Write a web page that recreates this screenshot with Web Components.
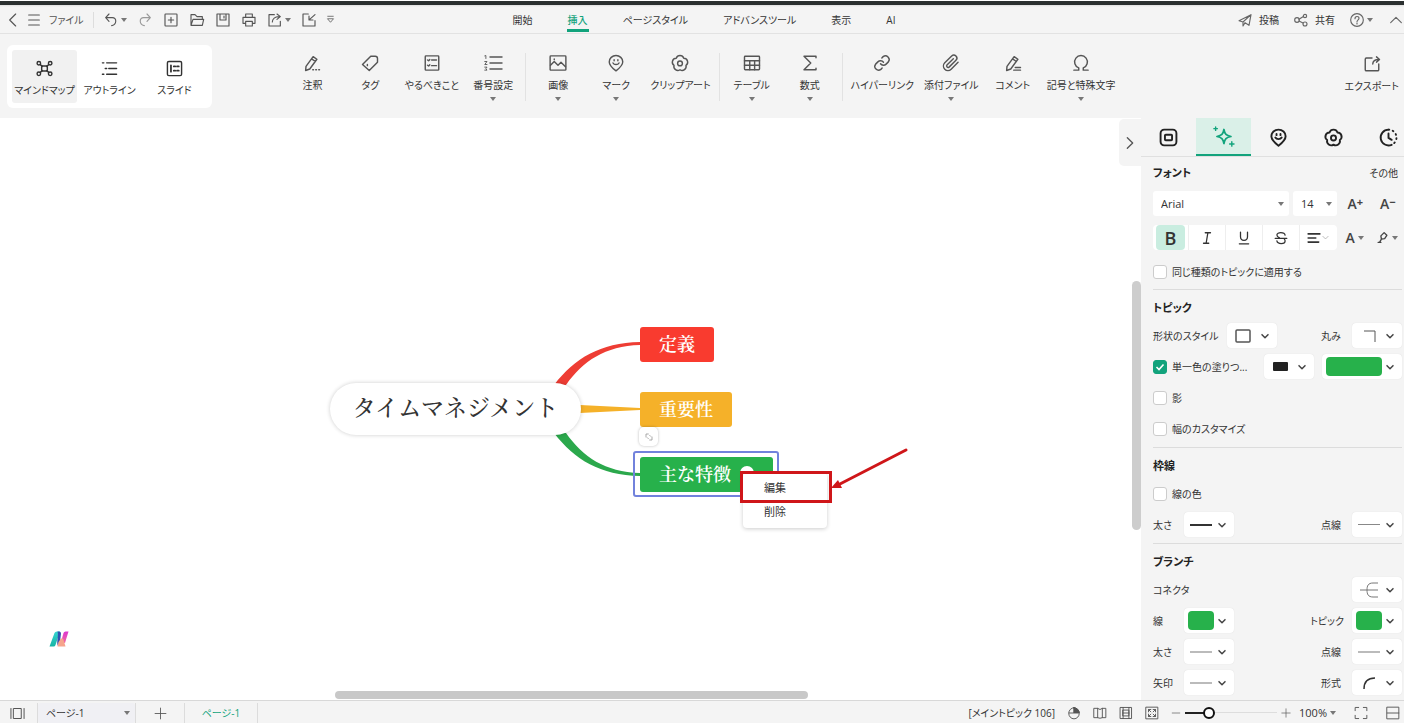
<!DOCTYPE html>
<html lang="ja">
<head>
<meta charset="utf-8">
<title>タイムマネジメント</title>
<style>
html,body{height:100%;margin:0}
body{
  --accent:#12a37c;--bar:#f4f4f4;--line:#dcdcdc;--ink:#333;--green:#27b14b;
  font:10px/16px "Open Sans","Noto Sans CJK JP",sans-serif;
  font-feature-settings:"palt";color:var(--ink);background:#fff;overflow:hidden}
</style>
</head>
<body>
<mind-app></mind-app>
<script>
const BASE=`*{box-sizing:border-box}
button,select,input{font:inherit;font-feature-settings:inherit;color:inherit;margin:0}
button{border:0;background:none;padding:0;display:flex;align-items:center;justify-content:center;white-space:nowrap}
a{color:inherit;text-decoration:none}`;

function define(name,css,html,setup){
  const t=document.createElement('template');
  t.innerHTML=`<style>${BASE}${css}</style>${html}`;
  customElements.define(name,class extends HTMLElement{
    connectedCallback(){
      if(this.shadowRoot)return;
      this.attachShadow({mode:'open'}).append(t.content.cloneNode(true));
      if(setup)setup(this,this.shadowRoot);
    }
  });
}

const flower='<path d="M7 5.600A5.300 5.300 0 0 1 17 5.600A5.300 5.300 0 0 1 20 15.200A5.300 5.300 0 0 1 12 21A5.300 5.300 0 0 1 4 15.200A5.300 5.300 0 0 1 7 5.600z"/><circle cx="12" cy="12.500" r="3.200"/>';
const smile='<path d="M12 22.500C7.500 19 3 15.500 3 10.500a9 8.500 0 0 1 18 0c0 5-4.500 8.500-9 12z"/><path d="M9.500 7.500v1.500M14.500 7.500v1.500M8 12c1.500 2.800 6.500 2.800 8 0"/>';
const pencil='<path d="M4 16.500 13.500 3.500 18.500 7 9 20l-5.500 2zM11.500 6.500l5 3.500"/>';
const I={
back:'<path d="M16 3 7 12l9 9"/>',
menu:'<path d="M4 4.500h16M4 12h16M4 19.500h16"/>',
undo:'<path d="M9 3 4 8.500 9 14M4.500 8.500H14c7 0 7 10-1 12"/>',
redo:'<path d="M15 3l5 5.500-5 5.500M19.500 8.500H10c-7 0-7 10 1 12"/>',
add:'<rect x="3" y="3" width="18" height="18" rx="1"/><path d="M12 8v8M8 12h8"/>',
open:'<path d="M3 20V4h6l3 3h8v4M3 20l3-9h16l-2 9z"/>',
save:'<path d="M3 3h18v18H3zM7.500 3v9h9V3M13.500 6v3"/>',
print:'<path d="M7 8V3h10v5M7 17H3V8h18v9h-4M7 14h10v7H7z"/>',
share:'<path d="M11 4H3v17h17v-7M8 15c0-5 4-8 10-8M15 3l5 4-5 4"/>',
imp:'<path d="M11 3H3v18h18v-8M21 4l-8 7M12 6v6h6"/>',
more:'<path d="M6 5h12M6 11l6 7 6-7z"/>',
send:'<path d="M3 13 21 4l-3 16-6-4-3 5v-6zM9 15 21 4"/>',
nodes:'<circle cx="6" cy="12" r="3.500"/><circle cx="18" cy="6" r="2.500"/><circle cx="18" cy="18" r="3"/><path d="m9 11 6-4M9 13.500l6 3"/>',
help:'<circle cx="12" cy="12" r="9.500"/><path d="M9 10c0-4.500 6-4 6-.5 0 2-3 2.500-3 5M12 16.500v1.500"/>',
up:'<path d="m4 16 8-8 8 8"/>',
right:'<path d="m8 4 8 8-8 8"/>',
mind:'<rect x="8" y="8.500" width="8" height="7" rx="1"/><circle cx="4" cy="4.500" r="2.500"/><circle cx="20" cy="4.500" r="2.500"/><circle cx="4" cy="19.500" r="2.500"/><circle cx="20" cy="19.500" r="2.500"/><path d="M6 6.500 9 9M18 6.500 15 9M6 17.500 9 15M18 17.500 15 15"/>',
outline:'<path d="M2 4h2M8 4h14M6 12h2M11 12h11M2 20h2M8 20h14"/>',
slide:'<rect x="2" y="2" width="20" height="20" rx="2"/><path d="M7 7.500v9M11 9h2M15.500 9H18M11 15h2M15.500 15H18" stroke-width="2.500"/>',
note:pencil+'<path d="M13 21h1M17 21h1M21 21h1"/>',
tag:'<path d="M13 3h6c2 0 3 1 3 3v5L11 22 2 14zM8.500 14v1.500"/>',
todo:'<rect x="3" y="2.500" width="18" height="19" rx="1"/><path d="m6 8 1.500 1L9 7.500M11.500 8H18M6 15l1.500 1L9 14.500M11.500 15.500H18"/>',
num:'<path d="M8 4h16M8 12h16M8 20h16"/><path d="M1 2.500 2.500 2v4M1 10h3L1 14h3M1 17.500h3L2.500 19.500 4 21.500H1" stroke-width="1.200"/>',
image:'<rect x="1.500" y="2.500" width="21" height="19" rx="1"/><path d="m2 15 5-5 5 5 4-4 6 6M7 6.500v1"/>',
mark:smile,clip:flower,
table:'<rect x="2" y="3" width="20" height="18" rx="1"/><path d="M2 9h20M2 15h20M9 9v12M15.500 9v12"/>',
sigma:'<path d="M20 5V3H4l9 9-9 9h16v-2"/>',
link:'<path d="M10 13a5 5 0 0 0 7.500.5l3-3a5 5 0 0 0-7-7l-1.700 1.700M14 11a5 5 0 0 0-7.500-.5l-3 3a5 5 0 0 0 7 7l1.700-1.700"/>',
attach:'<path d="M21.400 11.100l-9.200 9.200a6 6 0 0 1-8.500-8.500l9.200-9.200a4 4 0 0 1 5.700 5.700l-9.200 9.200a2 2 0 0 1-2.800-2.800l8.500-8.500"/>',
comment:pencil+'<path d="M15 18h7M13 21.500h9"/>',
omega:'<path d="M2.500 21.500H9V18.500A8.500 8.500 0 1 1 15 18.500V21.500H21.500"/>',
export:'<path d="M12 4H4.500Q3 4 3 5.500v14q0 1.500 1.500 1.500h15q1.500 0 1.500-1.500V12M13 12c0-4 3-6 8-6M18 2.500 22 6l-4 3.500"/>',
topic:'<rect x="2" y="2" width="20" height="20" rx="4.500"/><rect x="7.500" y="8.500" width="9" height="7" rx="1"/>',
spark:'<path d="M12.500 4c1 5.500 2.500 7 8 8-5.500 1-7 2.500-8 8-1-5.500-2.500-7-8-8 5.500-1 7-2.500 8-8z"/><path d="M3 1v4M1 3h4M21.500 18v5M19 20.500h5" stroke-width="1.600"/>',
clock:'<path d="M12 2a10 10 0 1 0 4 19.200M12 7v5.500l4 2.500"/><path d="M12 2a10 10 0 0 1 4 19.200" stroke-dasharray="1 4.500"/>',
italic:'<path d="M9 3h9M6 21h9M13.500 3l-3 18"/>',
under:'<path d="M6 2v8c0 8 12 8 12 0V2M4 22h16"/>',
strike:'<path d="M19 7c-1-5.500-14-5.500-14 0 0 2 1.500 3.500 4 4.500M2 12.500h20M5 17c1 6 14 6 14 0 0-1.500-.5-2.500-1.500-3.500"/>',
align:'<path d="M2 5h20M2 12h13M2 19h18" stroke-width="2.800"/>',
pen:'<path d="M10 15 9 9l6-6 5 5-4 6zM10 15l-3 5M4 21h5"/>',
down:'<path d="m3 8 9 9 9-9"/>',
plus:'<path d="M12 2v20M2 12h20"/>',minus:'<path d="M3 12h18"/>',
panes:'<rect x="6" y="4" width="12" height="16"/><path d="M1.500 4v16M22.500 4v16"/>',
mouse:'<path d="M12 3v9H3.500M12 3a9 9.500 0 1 0 9 9.500 9 9.500 0 0 0-9-9.500z"/><path d="M12 3v9h9c0-5-4-9-9-9z" fill="currentColor"/>',
book:'<path d="M2 4h6l4 2 4-2h6v16h-6l-4 1-4-1H2zM8 4v16M16 4v16"/>',
film:'<path d="M2.500 2.500h19v19h-19zM7 2.500v19M17 2.500v19M7 7h10v10H7zM7 12h10"/>',
fit:'<rect x="2" y="2" width="20" height="20"/><path d="M6 10V6h4M14 6h4v4M18 14v4h-4M10 18H6v-4M6 6l4 4M18 6l-4 4M18 18l-4-4M6 18l4-4"/>',
full:'<path d="M2 8V2.500h6M16 2.500h6V8M22 16v5.500h-6M8 21.500H2V16"/>',
fold:'<path d="M3 12V3h7M21 12v9h-7M14 7l3 3M7 14l3 3"/>',
split:'<path d="M2 2h20v20H2zM2 12h20"/>'
};
define('ui-icon',`:host{display:inline-flex;flex:none;width:16px;height:16px}svg{width:100%;height:100%;overflow:visible;fill:none;stroke:currentColor;stroke-width:var(--stroke,1.600);stroke-linejoin:round;stroke-linecap:round}`,
 `<svg viewBox="0 0 24 24" aria-hidden="true"></svg>`,(h,r)=>{r.querySelector('svg').innerHTML=I[h.getAttribute('name')]});

define('ui-caret',`:host{display:block;flex:none;width:8px;height:8px}svg{display:block}`,
 `<svg width="8" height="8" aria-hidden="true"><path d="M1 2h6L4 6z" fill="#777"/></svg>`);

define('tool-button',`:host{display:block;flex:none}button{width:26px;height:24px}button.drop{width:34px;padding-left:5px;justify-content:flex-start;gap:1px}`,
 `<button><ui-icon></ui-icon></button>`,(h,r)=>{
  const b=r.querySelector('button');b.setAttribute('aria-label',h.getAttribute('label'));
  b.innerHTML=`<ui-icon name="${h.getAttribute('icon')}"></ui-icon>`+(h.hasAttribute('drop')?'<ui-caret></ui-caret>':'');
  if(h.hasAttribute('drop'))b.className='drop';
 });

define('title-bar',`
:host{display:grid;grid-template-columns:1fr auto 1fr;height:34px;padding-top:6px;background:linear-gradient(#fff 1px,#2b3030 1px,#2b3030 5px,#dedede 5px,var(--bar) 7px);border-bottom:1px solid #e2e2e2;--stroke:1.700}
.left,.right{display:flex;align-items:center}
.left{padding-left:2px;color:#555}
.back{width:22px}.file{gap:7px;padding:0 2px}
.sep{width:1px;height:16px;background:#ddd;margin:0 4px 0 7px}
tool-button[icon=redo]{color:#999}
.last{width:18px}.last ui-icon{width:11px;height:11px}
nav{display:flex;align-items:flex-start;gap:33px;padding-left:4px}
nav a{display:flex;align-items:center;height:26px;padding:5px 1px 0;border-bottom:3px solid transparent}
nav a[aria-current]{color:var(--accent);border-color:var(--accent);font-weight:500}
.right{justify-content:flex-end;gap:14px}.right button{gap:6px}.right .help{gap:1px}
.right ui-icon{color:#666}`,
`<div class="left">
<button class="back" aria-label="戻る"><ui-icon name="back"></ui-icon></button>
<button class="file"><ui-icon name="menu"></ui-icon>ファイル</button><span class="sep"></span>
<tool-button icon="undo" drop label="元に戻す"></tool-button><tool-button icon="redo" label="やり直す"></tool-button>
<tool-button icon="add" label="新規"></tool-button><tool-button icon="open" label="開く"></tool-button>
<tool-button icon="save" label="保存"></tool-button><tool-button icon="print" label="印刷"></tool-button>
<tool-button icon="share" drop label="書き出し"></tool-button><tool-button icon="imp" label="取り込み"></tool-button>
<button class="last" aria-label="その他"><ui-icon name="more"></ui-icon></button></div>
<nav><a href="#home">開始</a><a href="#insert" aria-current="page">挿入</a><a href="#style">ページスタイル</a><a href="#tools">アドバンスツール</a><a href="#view">表示</a><a href="#ai">AI</a></nav>
<div class="right"><button><ui-icon name="send"></ui-icon>投稿</button><button><ui-icon name="nodes"></ui-icon>共有</button><button class="help" aria-label="ヘルプ"><ui-icon name="help"></ui-icon><ui-caret></ui-caret></button><button aria-label="折りたたむ"><ui-icon name="up"></ui-icon></button></div>`);

define('ribbon-item',`:host{display:block;flex:none}
button{flex-direction:column;justify-content:flex-start;min-width:58px;padding:1px 5px 0}
ui-icon{width:18px;height:18px;margin-bottom:5px;color:#555;--stroke:1.900}
ui-caret{margin-top:2px}`,
`<button><ui-icon></ui-icon><span><slot></slot></span></button>`,(h,r)=>{
 const b=r.querySelector('button');
 b.innerHTML=`<ui-icon name="${h.getAttribute('icon')}"></ui-icon><span><slot></slot></span>`+(h.hasAttribute('drop')?'<ui-caret></ui-caret>':'');
});

define('ribbon-bar',`
:host{display:grid;grid-template-columns:1fr auto 1fr;height:84px;background:var(--bar);align-items:start}
.modes{justify-self:start;display:flex;margin:11px 0 0 7px;padding:5px;height:63px;background:#fff;border-radius:6px}
.modes button{flex-direction:column;width:65px;padding-top:4px;gap:5px;border-radius:3px}
.modes button[aria-pressed=true]{background:#f1f1f1}
.modes ui-icon{width:17px;height:17px;--stroke:2}
.items{display:flex;padding-top:19px}
.sep{width:1px;height:48px;background:#e2e2e2;margin:0 3px}
.end{justify-self:end;padding-top:20px}`,
`<div class="modes"><button aria-pressed="true"><ui-icon name="mind"></ui-icon>マインドマップ</button><button aria-pressed="false"><ui-icon name="outline"></ui-icon>アウトライン</button><button aria-pressed="false"><ui-icon name="slide"></ui-icon>スライド</button></div>
<div class="items"><ribbon-item icon="note">注釈</ribbon-item><ribbon-item icon="tag">タグ</ribbon-item><ribbon-item icon="todo">やるべきこと</ribbon-item><ribbon-item icon="num" drop>番号設定</ribbon-item><span class="sep"></span>
<ribbon-item icon="image" drop>画像</ribbon-item><ribbon-item icon="mark" drop>マーク</ribbon-item><ribbon-item icon="clip">クリップアート</ribbon-item><span class="sep"></span>
<ribbon-item icon="table" drop>テーブル</ribbon-item><ribbon-item icon="sigma" drop>数式</ribbon-item><span class="sep"></span>
<ribbon-item icon="link">ハイパーリンク</ribbon-item><ribbon-item icon="attach" drop>添付ファイル</ribbon-item><ribbon-item icon="comment">コメント</ribbon-item><ribbon-item icon="omega" drop>記号と特殊文字</ribbon-item></div>
<div class="end"><ribbon-item icon="export">エクスポート</ribbon-item></div>`);

define('topic-node',`:host{position:absolute;display:flex;align-items:center;padding:0 19px;height:35px;border-radius:3px;color:#fff;font-size:18px;line-height:24px;font-weight:600;font-feature-settings:normal;white-space:nowrap;background:var(--fill)}`,`<slot></slot>`);

define('mind-canvas',`
:host{display:block;position:relative;background:#fff;overflow:hidden;min-width:0}
.branches,.arrow{position:absolute;left:0;top:0;width:1000px;height:500px;pointer-events:none}
.root{position:absolute;left:330px;top:265px;width:251px;height:52px;border-radius:26px;background:#fff;box-shadow:0 0 4px #0003;display:flex;align-items:center;justify-content:center;font-size:23px;line-height:32px;font-weight:500;font-family:"Liberation Serif","Noto Serif CJK JP","Noto Sans CJK JP",serif;font-feature-settings:normal}
.sel{position:absolute;left:633px;top:333px;width:146px;height:46px;border:2px solid #7282dc;border-radius:3px}
.n1,.n2,.n3{left:640px;font-family:"Liberation Serif","Noto Serif CJK JP","Noto Sans CJK JP",serif}
.n1{top:209px}.n2{top:274px}.n3{top:339px;padding-right:42px}
.fold{position:absolute;left:639px;top:309px;width:19px;height:19px;border-radius:5px;background:#fff;box-shadow:0 0 3px #0004;color:#999}
.fold ui-icon{width:8px;height:8px;--stroke:2.500}
.dot{position:absolute;left:740px;top:348px;width:14px;height:14px;border-radius:50%;background:#fff}
.menu{position:absolute;left:743px;top:355px;width:84px;height:55px;padding-top:3px;background:#fff;border-radius:4px;box-shadow:0 1px 4px #0003;font-size:11px}
.menu button{width:100%;height:24px;padding-left:21px;justify-content:flex-start}
.frame{position:absolute;left:740px;top:353px;width:92px;height:32px;border:3px solid #cf1619}
.toggle{position:absolute;right:0;top:1px;width:22px;height:47px;background:var(--bar);border-radius:5px 0 0 5px;color:#555}
.toggle ui-icon{--stroke:2}
.v{position:absolute;right:0;top:163px;width:9px;height:249px;background:#cdcdcd;border-radius:5px}
.h{position:absolute;left:335px;bottom:1px;width:473px;height:8px;background:#c8c8c8;border-radius:4px}
.logo{position:absolute;left:49px;top:513px;width:20px;height:16px}`,
`<svg class="branches" aria-hidden="true"><path fill="#ee3d34" d="M554 267C575 240 600 225 640 224v3C605 228 583 243 566 267z"/><path fill="#f5b129" d="M580 287l60 3v2l-60 3z"/><path fill="#2ba84c" d="M554 315C575 342 600 357 640 358v-3C605 354 583 339 566 315z"/></svg>
<div class="root">タイムマネジメント</div>
<div class="sel"></div>
<topic-node class="n1" style="--fill:#f93b2f">定義</topic-node>
<topic-node class="n2" style="--fill:#f5b129">重要性</topic-node>
<topic-node class="n3" style="--fill:#27b14b">主な特徴</topic-node>
<button class="fold" aria-label="展開"><ui-icon name="fold"></ui-icon></button>
<span class="dot"></span>
<div class="menu" role="menu"><button role="menuitem">編集</button><button role="menuitem">削除</button></div>
<div class="frame"></div>
<svg class="arrow" aria-hidden="true"><path d="M906 332 838 367" stroke="#cf1619" stroke-width="3" stroke-linecap="round"/><path d="M831 370l7-8 4 8z" fill="#cf1619"/></svg>
<svg class="logo" viewBox="0 0 20 16" aria-hidden="true"><defs><linearGradient id="a" x2="0" y2="1"><stop stop-color="#35d4d0"/><stop offset="1" stop-color="#18b4a4"/></linearGradient><linearGradient id="b" x2="0" y2="1"><stop stop-color="#dd35d0"/><stop offset="1" stop-color="#f06aa0"/></linearGradient></defs><path d="M5.500 2Q6 .5 8 .5h3L6.500 14q-.5 1.500-2 1.500H.5z" fill="url(#a)"/><path d="M8.500.5h1.500q2 0 2 2L11 11 9 15C7 11 10 5 8.500.5z" fill="#3350b0"/><path d="M14.500 2Q15 .5 16.500.5H19.500L16 12l-4-1z" fill="url(#b)"/><path d="M9.500 11 12 7.500l2 0L16.500 15.500H8.500z" fill="#f6a48c"/></svg>
<div class="v"></div><div class="h"></div>
<button class="toggle" aria-label="パネルを閉じる"><ui-icon name="right"></ui-icon></button>`);

define('drop-select',`:host{display:block;position:relative}
select{appearance:none;width:100%;height:100%;border:0;border-radius:3px;background:var(--select-bg,#fff);padding:0 14px 0 8px;outline:0}
ui-caret{position:absolute;right:4px;top:calc(50% - 4px);pointer-events:none}`,
`<select></select><ui-caret></ui-caret>`,(h,r)=>{const s=r.querySelector('select');s.setAttribute('aria-label',h.getAttribute('label'));s.add(new Option(h.getAttribute('value')))});

define('picker-box',`:host{display:block;flex:none;width:50px}:host([wide]){width:80px}
button{width:100%;height:25px;padding:0 8px 0 3px;background:#fff;border-radius:4px;gap:4px;box-shadow:0 0 1px #0002}
span{flex:1;display:flex;align-items:center;justify-content:center}ui-icon{width:8px;height:8px;color:#444;--stroke:4.500}`,
`<button aria-haspopup="listbox"><span><slot></slot></span><ui-icon name="down"></ui-icon></button>`,(h,r)=>r.querySelector('button').setAttribute('aria-label',h.getAttribute('label')));

define('check-row',`:host{display:block}label{display:flex;align-items:center;gap:5px;white-space:nowrap}
input{appearance:none;width:14px;height:14px;border:1px solid #ccc;border-radius:3px;background:#fff}
input:checked{border-color:var(--accent);background:var(--accent) url("data:image/svg+xml,%3Csvg xmlns='http://www.w3.org/2000/svg' viewBox='0 0 12 12'%3E%3Cpath d='M2.500 6l2.500 2.500 4.500-5' fill='none' stroke='white' stroke-width='1.600'/%3E%3C/svg%3E")}`,
`<label><input type="checkbox"><span><slot></slot></span></label>`,(h,r)=>{r.querySelector('input').checked=h.hasAttribute('checked')});

define('style-panel',`
:host{display:block;width:263px;background:var(--bar);overflow:hidden}
.tabs{display:flex;height:39px;border-bottom:1px solid #e0e0e0;color:#222}
.tabs button{flex:none;width:55px}.tabs ui-icon{width:19px;height:19px;--stroke:2.400}
.tabs [aria-selected=true]{background:#daf0e8;color:var(--accent);border-bottom:2px solid var(--accent)}
.tabs [aria-selected=true] ui-icon{width:21px;height:21px;--stroke:2}
section{margin:0 2px 0 12px;padding:6px 0 3px;border-top:1px solid var(--line)}
section.font{border:0;padding-top:4px;display:flex;flex-direction:column;gap:3px}
header{display:flex;justify-content:space-between;align-items:center;height:24px}
header a{margin-right:4px}
h2{margin:0;font-size:11px;font-weight:700;color:#222}
.row{display:flex;align-items:center;gap:8px;height:31px;white-space:nowrap}
.label{min-width:23px}.push{margin-left:auto}
.font .row{gap:4px}.font{padding-bottom:2px}
.face,.size{height:25px;font-size:11px}.face{width:136px}.size{width:44px}
.step{flex:1;font-size:14px;font-weight:600;color:#444}.step sup{font-size:11px;line-height:11px;font-weight:700;align-self:flex-start}
.group{display:flex;width:184px;height:25px;background:#fff;border-radius:4px;padding-left:3px}
.group button{width:37px;border-left:1px solid #eee;gap:1px}
.group .b{width:29px;background:#c9ede0;border:0;border-radius:4px;font-size:18px;font-weight:600;margin-right:3px}
.group ui-icon{width:14px;height:14px;--stroke:2.200}.group .mini{width:7px;height:7px;color:#999}
.color{flex:1;font-size:14px;font-weight:600;color:#444;gap:2px}.color ui-icon{width:13px;height:13px;--stroke:2.500}
.sw{width:26px;height:19px;border-radius:4px;background:var(--green)}.sw.big{width:56px}
.blk{width:15px;height:9px;background:#222;border-radius:1px}
.ln{width:22px;height:1px;background:#888}.ln.bold{height:2px;background:#333}.ln.mid{height:2px;background:#bbb}
svg{display:block;fill:none;stroke:#555}`,
`<div class="tabs" role="tablist"><button role="tab" aria-label="トピック"><ui-icon name="topic"></ui-icon></button><button role="tab" aria-selected="true" aria-label="スタイル"><ui-icon name="spark"></ui-icon></button><button role="tab" aria-label="マーク"><ui-icon name="mark"></ui-icon></button><button role="tab" aria-label="クリップアート"><ui-icon name="clip"></ui-icon></button><button role="tab" aria-label="履歴"><ui-icon name="clock"></ui-icon></button></div>
<section class="font"><header><h2>フォント</h2><a href="#more">その他</a></header>
<div class="row"><drop-select class="face" label="フォント" value="Arial"></drop-select><drop-select class="size" label="サイズ" value="14"></drop-select><button class="step" aria-label="大きく">A<sup>+</sup></button><button class="step" aria-label="小さく">A<sup>−</sup></button></div>
<div class="row"><div class="group"><button class="b" aria-label="太字">B</button><button aria-label="斜体"><ui-icon name="italic"></ui-icon></button><button aria-label="下線"><ui-icon name="under"></ui-icon></button><button aria-label="取り消し線"><ui-icon name="strike"></ui-icon></button><button aria-label="配置"><ui-icon name="align"></ui-icon><ui-icon class="mini" name="down"></ui-icon></button></div><button class="color" aria-label="文字色">A<ui-caret></ui-caret></button><button class="color" aria-label="蛍光ペン"><ui-icon name="pen"></ui-icon><ui-caret></ui-caret></button></div>
<div class="row"><check-row>同じ種類のトピックに適用する</check-row></div></section>
<section><header><h2>トピック</h2></header>
<div class="row"><span class="label">形状のスタイル</span><picker-box label="形状のスタイル"><svg width="18" height="14"><rect x="2" y="1" width="14" height="12" rx="1" stroke-width="1.500"/></svg></picker-box><span class="label push">丸み</span><picker-box label="丸み"><svg width="18" height="14"><path d="M4 2h11v11"/></svg></picker-box></div>
<div class="row"><check-row checked>単一色の塗りつ...</check-row><picker-box class="push" label="塗りつぶし"><span class="blk"></span></picker-box><picker-box wide label="塗りつぶしの色"><span class="sw big"></span></picker-box></div>
<div class="row"><check-row>影</check-row></div><div class="row"><check-row>幅のカスタマイズ</check-row></div></section>
<section><header><h2>枠線</h2></header><div class="row"><check-row>線の色</check-row></div>
<div class="row"><span class="label">太さ</span><picker-box label="太さ"><span class="ln bold"></span></picker-box><span class="label push">点線</span><picker-box label="点線"><span class="ln"></span></picker-box></div></section>
<section><header><h2>ブランチ</h2></header>
<div class="row"><span class="label">コネクタ</span><picker-box class="push" label="コネクタ"><svg width="20" height="18"><path d="M1 9h18M19 2h-5C9 2 8 5 8 9s1 7 6 7h5" stroke="#777"/></svg></picker-box></div>
<div class="row"><span class="label">線</span><picker-box label="線"><span class="sw"></span></picker-box><span class="label push">トピック</span><picker-box label="トピック"><span class="sw"></span></picker-box></div>
<div class="row"><span class="label">太さ</span><picker-box label="太さ"><span class="ln mid"></span></picker-box><span class="label push">点線</span><picker-box label="点線"><span class="ln mid"></span></picker-box></div>
<div class="row"><span class="label">矢印</span><picker-box label="矢印"><span class="ln mid"></span></picker-box><span class="label push">形式</span><picker-box label="形式"><svg width="18" height="16"><path d="M4 14c0-7 3-11 11-11" stroke="#333" stroke-width="1.500"/></svg></picker-box></div></section>`);

define('status-bar',`
:host{display:flex;align-items:stretch;justify-content:space-between;height:23px;background:var(--bar);border-top:1px solid #d8d8d8;padding-top:2px}
div{display:flex;align-items:center}
ui-icon{color:#555;width:14px;height:14px}
.left>*{height:100%}
.view{width:38px;padding-right:3px;border-right:1px solid var(--line)}.view ui-icon{width:15px;height:15px}
.page{width:98px;border-right:1px solid var(--line);--select-bg:#f0f0f4}
.plus{width:49px;border-right:1px solid var(--line)}.plus ui-icon{width:13px;height:13px}
.tab{display:flex;align-items:center;width:73px;justify-content:center;color:var(--accent);border-right:1px solid var(--line)}
.right{gap:12px;padding-right:4px}
.zoom{gap:4px}.zoom .step ui-icon{width:10px;height:10px}
.pct{gap:2px;margin-left:4px;font-size:11px}.last{gap:18px;margin-left:5px}
input{appearance:none;width:92px;height:12px;background:linear-gradient(#222,#222) 0 5px/24px 2px no-repeat,linear-gradient(#ddd,#ddd) 0 5px/100% 1px no-repeat}
input::-webkit-slider-thumb{appearance:none;width:12px;height:12px;border:2px solid #111;border-radius:50%;background:#fff}`,
`<div class="left"><button class="view" aria-label="表示"><ui-icon name="panes"></ui-icon></button><drop-select class="page" label="ページ" value="ページ-1"></drop-select><button class="plus" aria-label="ページを追加"><ui-icon name="plus"></ui-icon></button><a class="tab" href="#page1">ページ-1</a></div>
<div class="right"><span>[メイントピック 106]</span><button aria-label="マウス"><ui-icon name="mouse"></ui-icon></button><button aria-label="ブック"><ui-icon name="book"></ui-icon></button><button aria-label="スライド"><ui-icon name="film"></ui-icon></button><button aria-label="合わせる"><ui-icon name="fit"></ui-icon></button>
<div class="zoom"><button class="step" aria-label="縮小"><ui-icon name="minus"></ui-icon></button><input type="range" min="0" max="100" value="22" aria-label="ズーム"><button class="step" aria-label="拡大"><ui-icon name="plus"></ui-icon></button><button class="pct">100%<ui-caret></ui-caret></button></div>
<div class="last"><button aria-label="全画面"><ui-icon name="full"></ui-icon></button><button aria-label="分割"><ui-icon name="split"></ui-icon></button></div></div>`);

define('mind-app',`:host{display:grid;grid-template-rows:auto auto 1fr auto;height:100vh}
main{display:grid;grid-template-columns:1fr auto;min-height:0}`,
`<title-bar></title-bar><ribbon-bar></ribbon-bar><main><mind-canvas></mind-canvas><style-panel></style-panel></main><status-bar></status-bar>`);
</script>
</body>
</html>
